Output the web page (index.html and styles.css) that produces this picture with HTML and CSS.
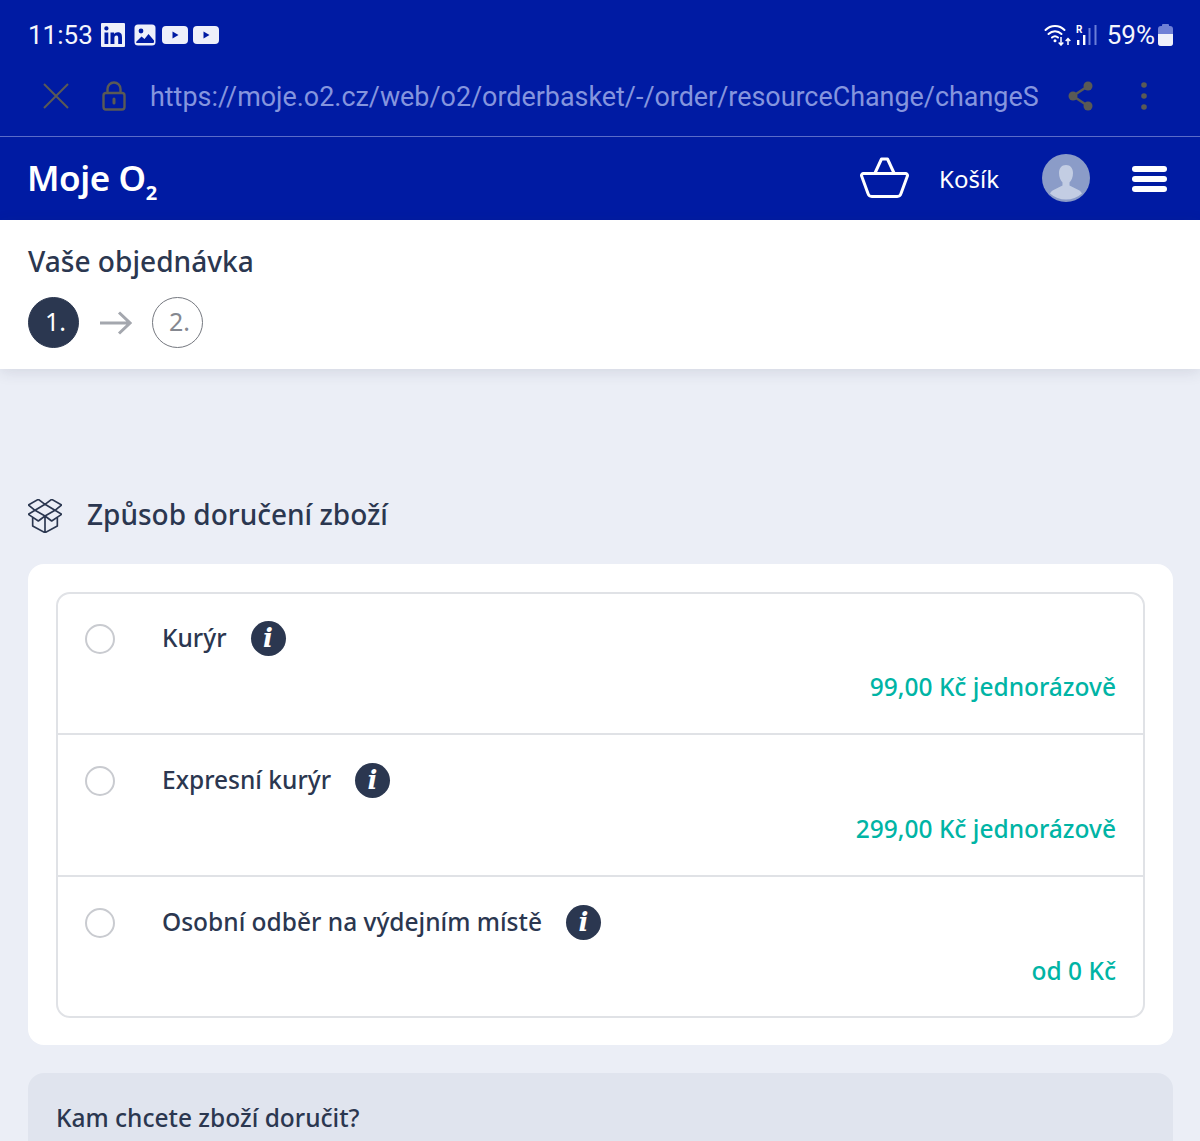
FILE: index.html
```html
<!DOCTYPE html>
<html lang="cs">
<head>
<meta charset="utf-8">
<title>Moje O2</title>
<link rel="stylesheet" href="styles.css">
</head>
<body>
<header class="chrome">
  <div class="status">
    <div class="status-left">
      <span class="clock">11:53</span>
      <svg class="ic-li" viewBox="0 0 24 24"><rect width="24" height="24" rx="1" fill="#eef0fa"/><path fill="#001ba3" d="M3.500 9.500h3.800V21H3.500zM5.400 3.300a2.100 2.100 0 1 1 0 4.300 2.100 2.100 0 0 1 0-4.300zM9.500 9.500h3.600v1.600c.6-1 1.900-1.900 3.700-1.900 3.600 0 4.200 2.300 4.200 5.400V21h-3.800v-5.600c0-1.400 0-2.900-1.700-2.900s-2.100 1.300-2.100 2.800V21H9.500z"/></svg>
      <svg class="ic-img" viewBox="0 0 22 22"><rect x="0.500" y="0.500" width="21" height="21" rx="3.500" fill="#eef0fa"/><circle cx="7" cy="7" r="2.400" fill="#001ba3"/><path fill="#001ba3" d="M2 18l5.500-5.500 3 2.500 4-5 5.500 6.500v1.500a1 1 0 0 1-1 1H3a1 1 0 0 1-1-1z"/></svg>
      <svg class="ic-yt" viewBox="0 0 26 18"><rect width="26" height="18" rx="4" fill="#eef0fa"/><path fill="#001ba3" d="M10.500 5.500l6 3.500-6 3.500z"/></svg>
      <svg class="ic-yt" viewBox="0 0 26 18"><rect width="26" height="18" rx="4" fill="#eef0fa"/><path fill="#001ba3" d="M10.500 5.500l6 3.500-6 3.500z"/></svg>
    </div>
    <div class="status-right">
      <svg class="ic-wifi" viewBox="0 0 28 22" fill="none" stroke="#fff" stroke-width="2" stroke-linecap="round"><path d="M1.500 6C6.500.500 15.500.500 20.500 6M4.500 10c3.800-3.800 9.200-3.800 13 0M8 13.500c1.800-1.500 4.200-1.500 6 0"/><circle cx="11" cy="16.800" r="1.500" fill="#fff" stroke="none"/><path d="M17 13v8m-2.300-2.500L17 21l2.300-2.500M24 21v-6.500m-2.300 2.500l2.300-2.500 2.300 2.500" stroke-width="1.500" stroke-linecap="butt"/></svg>
      <svg class="ic-sig" viewBox="0 0 21 22"><text x="0" y="9" class="sig-r">R</text><rect x="1" y="16" width="2.400" height="5" fill="#fff"/><rect x="7" y="11" width="2.400" height="10" fill="#fff"/><rect x="12.500" y="4" width="2" height="17" fill="#6a7fd8"/><rect x="18.500" y="1" width="2" height="20" fill="#6a7fd8"/></svg>
      <span class="pct">59%</span>
      <span class="battery"><span class="battery-nub"></span><span class="battery-body"><span class="battery-fill"></span></span></span>
    </div>
  </div>
  <div class="urlbar">
    <svg class="ic-x" viewBox="0 0 28 28" fill="none" stroke="#5a5a55" stroke-width="2"><path d="M2 2l24 24M26 2L2 26"/></svg>
    <svg class="ic-lock" viewBox="0 0 24 30" fill="none" stroke="#5a5a55" stroke-width="2.400"><rect x="1.500" y="12" width="21" height="16.500" rx="2.500"/><path d="M5.500 12V8a6.500 6.500 0 0 1 13 0v4"/><path d="M12 18v4" stroke-width="3" stroke-linecap="round"/></svg>
    <div class="url">https://moje.o2.cz/web/o2/orderbasket/-/order/resourceChange/changeSim</div>
    <svg class="ic-share" viewBox="0 0 26 30"><g fill="#5a5a55"><circle cx="20" cy="5" r="4.500"/><circle cx="5" cy="15" r="4.500"/><circle cx="20" cy="25" r="4.500"/></g><path d="M20 5L5 15l15 10" fill="none" stroke="#5a5a55" stroke-width="2.400"/></svg>
    <svg class="ic-more" viewBox="0 0 6 30"><g fill="#5a5a55"><circle cx="3" cy="4" r="2.800"/><circle cx="3" cy="15" r="2.800"/><circle cx="3" cy="26" r="2.800"/></g></svg>
  </div>
</header>
<nav class="nav">
  <div class="logo">Moje O<sub class="logo-sub">2</sub></div>
  <div class="nav-right">
    <svg class="ic-basket" viewBox="0 0 49 42" fill="none" stroke="#fff" stroke-width="3" stroke-linejoin="round" stroke-linecap="round"><path d="M3.500 16.500h42a2 2 0 0 1 1.900 2.600L41 36.500a4 4 0 0 1-3.800 3H11.800a4 4 0 0 1-3.800-3L1.600 19.100a2 2 0 0 1 1.900-2.600z"/><path d="M15 16L21.500 2h6L34 16"/></svg>
    <span class="cart-label">Košík</span>
    <span class="avatar"><svg viewBox="0 0 48 48"><circle cx="24" cy="24" r="24" fill="#8b9cc8"/><path fill="#c3cde3" d="M24 11c4.500 0 7 3.500 7 8 0 4-1.500 7.500-3.500 9.500v3l9 4.500c2 1 3 2.500 3.500 3.500a24 24 0 0 1-32 0c.5-1 1.500-2.500 3.500-3.500l9-4.500v-3C18.500 26.500 17 23 17 19c0-4.500 2.500-8 7-8z"/></svg></span>
    <span class="burger"><i></i><i></i><i></i></span>
  </div>
</nav>
<section class="order">
  <h1 class="order-title">Vaše objednávka</h1>
  <div class="steps">
    <span class="step step-on"><span class="step-num">1.</span></span>
    <svg class="ic-arrow" viewBox="0 0 32 24" fill="none" stroke="#a4a7ae" stroke-width="3"><path d="M0 12h30M19 1.500L30 12 19 22.500"/></svg>
    <span class="step"><span class="step-num">2.</span></span>
  </div>
</section>
<main class="content">
  <h2 class="section-title">
    <svg class="ic-box" viewBox="24 24 102 102" fill="none" stroke="#2b3750" stroke-width="5" stroke-linejoin="round" stroke-linecap="round"><path d="M25 42L55 25 75 40 95 25 125 42 105 58 125 70 95 90 75 75 55 90 25 70 45 58z"/><path d="M45 58L75 40 105 58 75 75z"/><path d="M38 80v25l37 20 37-20V80M75 75v50"/></svg>
    Způsob doručení zboží
  </h2>
  <div class="card">
    <div class="options">
      <div class="option">
        <div class="opt-top"><span class="radio"></span><span class="opt-name">Kurýr</span><span class="info">i</span></div>
        <div class="price">99,00 Kč jednorázově</div>
      </div>
      <div class="option">
        <div class="opt-top"><span class="radio"></span><span class="opt-name">Expresní kurýr</span><span class="info">i</span></div>
        <div class="price">299,00 Kč jednorázově</div>
      </div>
      <div class="option">
        <div class="opt-top"><span class="radio"></span><span class="opt-name">Osobní odběr na výdejním místě</span><span class="info">i</span></div>
        <div class="price">od 0 Kč</div>
      </div>
    </div>
  </div>
  <div class="card-grey">Kam chcete zboží doručit?</div>
</main>
</body>
</html>
```
FILE: styles.css
```css
* { box-sizing: border-box; }
html, body { margin: 0; padding: 0; }
body { width: 1200px; height: 1141px; overflow: hidden; background: #ebeef6; font-family: "Noto Sans", sans-serif; color: #2b3750; }

.chrome { background: #001ba3; height: 137px; border-bottom: 1px solid #5a6cc8; }
.status { height: 68px; display: flex; justify-content: space-between; align-items: center; padding: 2px 27px 0 28px; font-family: Roboto, sans-serif; color: #f4f5fb; }
.status-left, .status-right { display: flex; align-items: center; }
.clock { font-size: 26px; margin-right: 8px; }
.ic-li { width: 24px; height: 24px; margin-right: 9px; }
.ic-img { width: 22px; height: 22px; margin-right: 6px; }
.ic-yt { width: 26px; height: 18px; margin-right: 5px; }
.ic-wifi { width: 28px; height: 22px; margin-right: 4px; }
.ic-sig { width: 21px; height: 22px; margin-right: 10px; }
.sig-r { font: 700 10px Roboto, sans-serif; fill: #fff; }
.pct { font-size: 26px; margin-right: 3px; }
.battery { width: 15px; height: 22px; display: flex; flex-direction: column; align-items: center; }
.battery-nub { display: block; width: 7px; height: 2px; background: #6f80d6; border-radius: 1px 1px 0 0; }
.battery-body { display: block; width: 15px; height: 20px; border-radius: 3px; background: #6f80d6; overflow: hidden; }
.battery-fill { display: block; margin-top: 8px; height: 12px; background: #eef0fa; }

.urlbar { height: 68px; display: flex; align-items: center; padding: 0 0 0 42px; margin-top: -6px; }
.ic-x { width: 28px; height: 28px; margin-right: 32px; }
.ic-lock { width: 24px; height: 30px; margin-right: 24px; }
.url { width: 890px; padding-top: 2px; font-family: Roboto, sans-serif; font-size: 26.900px; color: #8595de; white-space: nowrap; overflow: hidden; }
.ic-share { width: 26px; height: 30px; margin-left: 28px; }
.ic-more { width: 6px; height: 30px; margin-left: 47px; }

.nav { height: 83px; background: #001ba3; display: flex; align-items: center; justify-content: space-between; padding: 0 33px 2px 27px; color: #fff; }
.logo { font-family: "Noto Sans", sans-serif; font-weight: 600; font-size: 35px; letter-spacing: -.4px; }
.logo-sub { font-size: 20px; font-weight: 700; vertical-align: -9px; line-height: 0; letter-spacing: 0; }
.nav-right { display: flex; align-items: center; }
.ic-basket { width: 49px; height: 42px; }
.cart-label { font-size: 24px; margin: 2px 43px 0 30px; }
.avatar { width: 48px; height: 48px; display: block; }
.avatar svg { display: block; }
.burger { width: 35px; display: flex; flex-direction: column; gap: 4px; margin-left: 42px; margin-top: 2px; }
.burger i { display: block; height: 6px; border-radius: 3px; background: #fff; }

.order { height: 149px; background: #fff; padding: 21px 28px 0; box-shadow: 0 3px 14px rgba(40, 50, 80, .12); position: relative; }
.order-title { margin: 0; font-size: 28.100px; font-weight: 500; line-height: 40px; }
.steps { display: flex; align-items: center; margin-top: 16px; }
.step { width: 51px; height: 51px; border-radius: 50%; border: 1px solid #75787f; color: #858890; display: flex; align-items: center; justify-content: center; font-size: 25px; }
.step-num { display: block; margin-bottom: 3px; margin-left: 4px; }
.step-on { background: #2b3750; border-color: #2b3750; color: #fff; }
.ic-arrow { width: 32px; height: 24px; margin: 0 20px 0 21px; }

.content { padding: 123px 27px 0 28px; }
.section-title { margin: 0; display: flex; align-items: center; font-size: 28px; font-weight: 500; line-height: 44px; }
.ic-box { width: 34px; height: 34px; margin-right: 25px; margin-top: 4px; }
.card { margin-top: 28px; background: #fff; border-radius: 16px; padding: 28px 28px 27px; }
.options { border: 2px solid #e0e2e6; border-radius: 14px; }
.option { height: 142px; padding: 28px 27px 0; border-bottom: 2px solid #e0e2e6; }
.option:first-child { height: 141px; padding-top: 27px; }
.option:last-child { border-bottom: 0; height: 139px; }
.opt-top { display: flex; align-items: center; height: 36px; }
.radio { width: 30px; height: 30px; border-radius: 50%; border: 2px solid #c9cbd0; margin-right: 47px; }
.opt-name { font-size: 24.500px; font-weight: 500; margin-right: 24px; margin-bottom: 4px; }
.info { width: 35px; height: 35px; margin-bottom: 2px; border-radius: 50%; background: #2b3750; color: #fff; display: flex; align-items: center; justify-content: center; font-family: "DejaVu Serif", serif; font-style: italic; font-weight: 700; font-size: 26px; }
.price { margin-top: 13px; line-height: 34px; text-align: right; font-size: 24.500px; font-weight: 500; color: #00b4a5; }
.card-grey { margin-top: 28px; background: #e0e4ee; border-radius: 16px; height: 120px; padding: 28px; font-size: 24.500px; font-weight: 500; }
```
